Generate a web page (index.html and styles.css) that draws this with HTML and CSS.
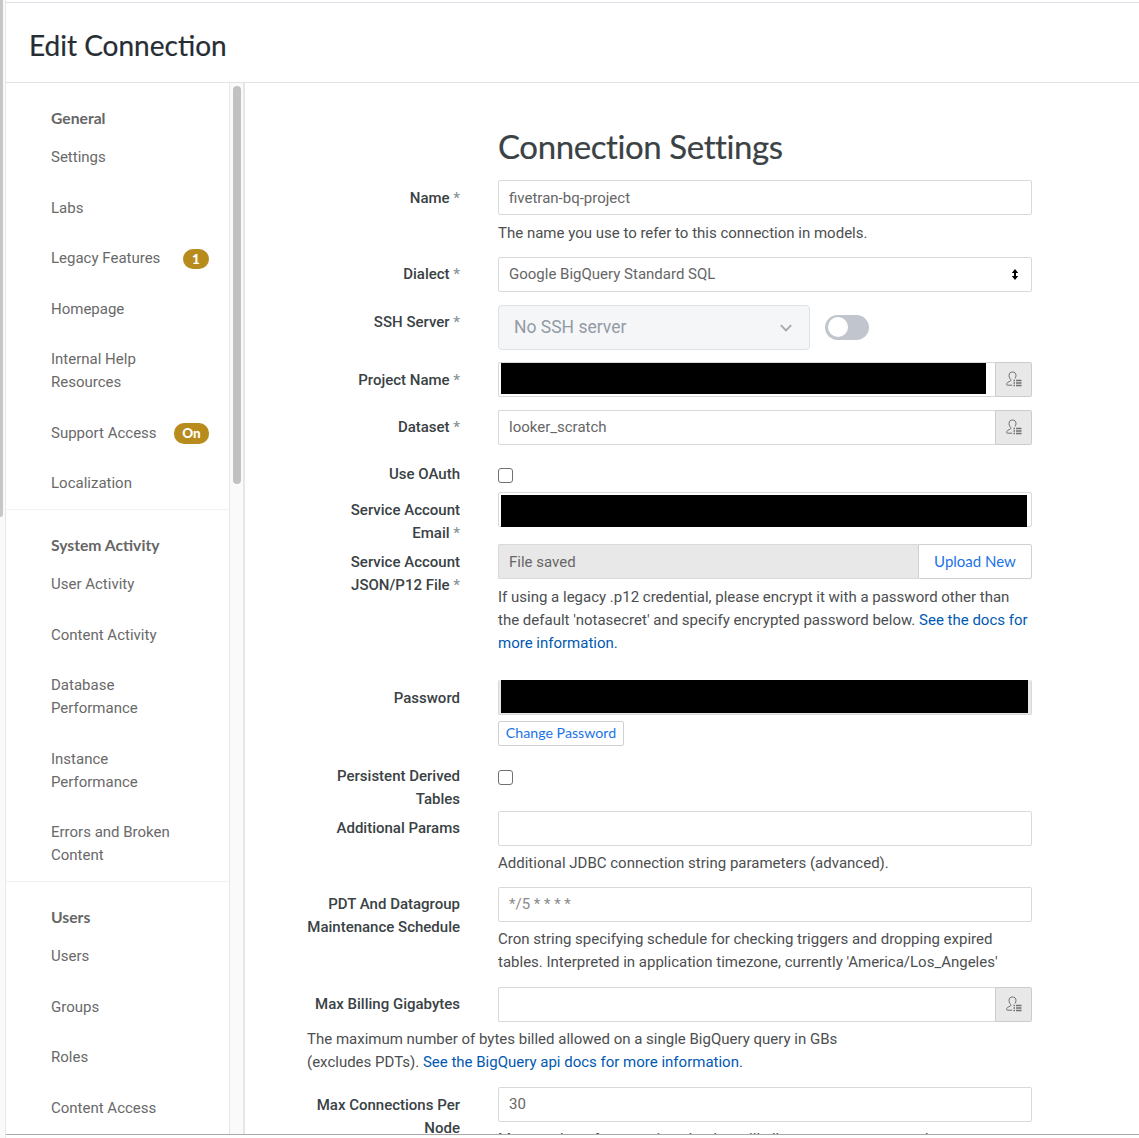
FILE: index.html
```html
<!DOCTYPE html>
<html lang="en">
<head>
<meta charset="utf-8">
<title>Edit Connection</title>
<link rel="stylesheet" href="styles.css">
</head>
<body>
<svg width="0" height="0" class="defs" aria-hidden="true">
  <symbol id="user-attr" viewBox="0 0 16 16">
    <g fill="none" stroke="#707070" stroke-width="1">
      <path d="M6.2 14.2H1.2C.3 14.2.5 12 1.6 11.4L4.4 10C5.3 9.400 4.900 8.600 4.100 7.800C3.300 6.800 3 5.500 3 4.400C3 2.200 4.400 1 6.500 1S10 2.200 10 4.400C10 5.700 9.700 6.600 9 7.500"/>
      <path d="M7.500 9.500H9M7.500 12H9M7.500 14.500H9M10 9.500H15.500M10 12H15.500M10 14.500H15.500" stroke-width="1.300"/>
    </g>
  </symbol>
</svg>
<div class="window">
  <div class="page-gutter"><div class="page-thumb"></div></div>
  <div class="app">
    <header class="header"><h1>Edit Connection</h1></header>
    <div class="body">
      <nav class="sidebar">
        <section>
          <h2>General</h2>
          <a>Settings</a>
          <a>Labs</a>
          <a>Legacy Features <span class="badge">1</span></a>
          <a>Homepage</a>
          <a>Internal Help<br>Resources</a>
          <a>Support Access <span class="badge on">On</span></a>
          <a>Localization</a>
        </section>
        <section>
          <h2>System Activity</h2>
          <a>User Activity</a>
          <a>Content Activity</a>
          <a>Database<br>Performance</a>
          <a>Instance<br>Performance</a>
          <a>Errors and Broken<br>Content</a>
        </section>
        <section>
          <h2>Users</h2>
          <a>Users</a>
          <a>Groups</a>
          <a>Roles</a>
          <a>Content Access</a>
        </section>
      </nav>
      <div class="side-scroll"><div class="side-thumb"></div></div>
      <main class="content">
        <h2 class="title">Connection Settings</h2>
        <div class="row low name">
          <label>Name <i>*</i></label>
          <div><div class="input">fivetran-bq-project</div><p>The name you use to refer to this connection in models.</p></div>
        </div>
        <div class="row dialect">
          <label>Dialect <i>*</i></label>
          <div class="input select">Google BigQuery Standard SQL
            <svg width="8" height="11" viewBox="0 0 8 11"><path d="M4 0L7.200 4H5V7H7.200L4 11L.8 7H3V4H.8Z"/></svg>
          </div>
        </div>
        <div class="row ssh">
          <label>SSH Server <i>*</i></label>
          <div class="ssh-field">
            <div class="ssh-select">No SSH server
              <svg width="14" height="10" viewBox="0 0 14 10"><path d="M1.800 2.200L7 7.400L12.200 2.200" fill="none" stroke="#a2a8ae" stroke-width="1.800"/></svg>
            </div>
            <div class="toggle"><span></span></div>
          </div>
        </div>
        <div class="row low project">
          <label>Project Name <i>*</i></label>
          <div class="group"><div class="input"><span class="redacted"></span></div><div class="addon"><svg><use href="#user-attr"/></svg></div></div>
        </div>
        <div class="row dataset">
          <label>Dataset <i>*</i></label>
          <div class="group"><div class="input">looker_scratch</div><div class="addon"><svg><use href="#user-attr"/></svg></div></div>
        </div>
        <div class="row low oauth">
          <label>Use OAuth</label>
          <div><span class="checkbox"></span></div>
        </div>
        <div class="row low email">
          <label>Service Account<br>Email <i>*</i></label>
          <div class="input"><span class="redacted"></span></div>
        </div>
        <div class="row low file">
          <label>Service Account<br>JSON/P12 File <i>*</i></label>
          <div>
            <div class="group"><div class="input saved">File saved</div><button class="upload">Upload New</button></div>
            <p>If using a legacy .p12 credential, please encrypt it with a password other than<br>the default 'notasecret' and specify encrypted password below. <a>See the docs for<br>more information.</a></p>
          </div>
        </div>
        <div class="row low password">
          <label>Password</label>
          <div><div class="input saved"><span class="redacted"></span></div><button class="change">Change Password</button></div>
        </div>
        <div class="row low pdt">
          <label>Persistent Derived<br>Tables</label>
          <div><span class="checkbox"></span></div>
        </div>
        <div class="row params">
          <label>Additional Params</label>
          <div><div class="input"></div><p>Additional JDBC connection string parameters (advanced).</p></div>
        </div>
        <div class="row cron">
          <label>PDT And Datagroup<br>Maintenance Schedule</label>
          <div><div class="input placeholder">*/5 * * * *</div><p>Cron string specifying schedule for checking triggers and dropping expired<br>tables. Interpreted in application timezone, currently 'America/Los_Angeles'</p></div>
        </div>
        <div class="row billing">
          <label>Max Billing Gigabytes</label>
          <div class="group"><div class="input"></div><div class="addon"><svg><use href="#user-attr"/></svg></div></div>
          <p>The maximum number of bytes billed allowed on a single BigQuery query in GBs<br>(excludes PDTs). <a>See the BigQuery api docs for more information.</a></p>
        </div>
        <div class="row connections">
          <label>Max Connections Per<br>Node</label>
          <div><div class="input">30</div><p>Max number of connections Looker will allow per user or per node</p></div>
        </div>
      </main>
    </div>
  </div>
</div>
</body>
</html>
```
FILE: styles.css
```css
* { box-sizing: border-box; }
body { margin: 0; background: #fff; color: #4c4e50; font: 15px/23px Roboto, sans-serif; }
h1, h2, p { margin: 0; }
.defs { display: block; }
.window { display: flex; height: 1138px; overflow: hidden; }
.page-gutter { flex: none; width: 6px; background: #fafafa; border-right: 1px solid #e8e8e8; }
.page-thumb { width: 3px; height: 517px; background: #c7c7c7; border-radius: 0 0 3px 0; }
.app { flex: 1; height: 1135px; display: flex; flex-direction: column; border-top: 2px solid #fff; border-bottom: 1px solid #aaa; }
.header { flex: none; height: 81px; padding: 22px 23px; border-top: 1px solid #dfe1ea; border-bottom: 1px solid #e3e3e5; }
h1 { font: 400 28px/40px Lato, sans-serif; color: #262d33; -webkit-text-stroke: .2px; }
.body { flex: 1; display: flex; min-height: 0; }
.sidebar { flex: none; width: 223px; overflow: hidden; color: #696969; }
.sidebar section { padding: 24px 20px 14px 45px; border-bottom: 1px solid #f2f2f2; }
.sidebar section:last-child { border-bottom: 0; }
.sidebar h2 { font: 700 15.700px/23px Lato, sans-serif; color: #666; margin-bottom: 16px; }
.sidebar a { display: flex; justify-content: space-between; align-items: center; margin-bottom: 27.500px; }
.sidebar a:last-child { margin-bottom: 0; }
.badge { width: 26px; height: 20px; margin-top: 1px; border-radius: 10px; background: #b88b1d; color: #fff; font: 900 13.500px/20px Lato, sans-serif; text-align: center; }
.badge.on { width: 35px; height: 21px; line-height: 21px; }
.side-scroll { flex: none; width: 16px; padding: 3px 3px 0; background: #fafafa; border-left: 1px solid #e8e8e8; border-right: 2px solid #e6e6e6; }
.side-thumb { width: 8px; height: 398px; border-radius: 4px; background: #c1c1c1; }
.content { flex: 1; overflow: hidden; padding: 40px 107px 0 62px; }
.title { font: 400 33px/46px Lato, sans-serif; letter-spacing: -.4px; color: #3a4245; -webkit-text-stroke: .2px; padding-left: 191px; height: 57px; }
.row { display: grid; grid-template-columns: 153px 534px; column-gap: 38px; align-content: start; }
.row label { padding-top: 6px; text-align: right; white-space: nowrap; font-weight: 500; color: #3a4245; }
.row i { font-style: normal; color: #879596; }
.row p { margin-top: 6px; white-space: nowrap; }
.row p a { color: #0059b2; }
.row.low label { padding-top: 7px; }
.row.low p { padding-top: 1px; }
.name { height: 77px; } .dialect { height: 48px; } .ssh { height: 57px; } .project { height: 48px; }
.dataset { height: 46px; } .oauth { height: 36px; } .email { height: 52px; } .file { height: 136px; }
.password { height: 78px; } .pdt { height: 53px; } .params { height: 76px; } .cron { height: 100px; } .billing { height: 100px; }
.billing p { grid-column: 1 / -1; }
.connections label { padding-top: 7px; }
.connections p { margin-top: 6px; }
.input { height: 35px; padding: 5px 10px; border: 1px solid #d9d9d9; border-radius: 2px; color: #666; background: #fff; }
.name .input, .file .input { padding-top: 6px; }
.saved { background: #e8e8e8; }
.placeholder { color: #8a8a8a; }
.select { display: flex; justify-content: space-between; align-items: center; padding-right: 12px; }
.group { display: flex; }
.group .input { flex: 1; border-right: 0; border-radius: 2px 0 0 2px; }
.addon { width: 37px; height: 35px; padding: 8px 10px; border: 1px solid #ccc; border-radius: 0 2px 2px 0; background: #e8e8e8; }
.addon svg { display: block; width: 16px; height: 16px; }
.redacted { display: block; background: #000; }
.project .input { padding: 0 9px 0 2px; } .project .redacted { height: 31px; }
.email .input { padding: 2px 4px 0 2px; } .email .redacted { height: 32px; }
.password .input { padding: 0 3px 0 2px; border-top: 0; } .password .redacted { height: 33px; }
.ssh-field { display: flex; gap: 15px; align-items: center; height: 45px; }
.ssh-select { width: 312px; height: 45px; padding: 0 16px 0 15px; display: flex; justify-content: space-between; align-items: center; border: 1px solid #dee1e5; border-radius: 4px; background: #f5f6f8; color: #939ba5; font-size: 17.500px; }
.toggle { width: 44px; height: 25px; padding: 2px 3px; border-radius: 13px; background: #c1c6ce; }
.toggle span { display: block; width: 20px; height: 20px; border-radius: 50%; background: #fff; }
.checkbox { display: block; width: 15px; height: 15px; margin-top: 12px; border: 1px solid #707070; border-radius: 3px; }
button { background: #fff; border: 1px solid #d0d0d0; color: #1a73e8; font-family: Lato, sans-serif; padding: 0 0 2px; white-space: nowrap; }
.upload { width: 114px; height: 35px; font-size: 15px; border-radius: 0 2px 2px 0; }
.change { display: block; width: 126px; height: 25px; margin-top: 6px; font-size: 14.200px; border-radius: 2px; }
```
